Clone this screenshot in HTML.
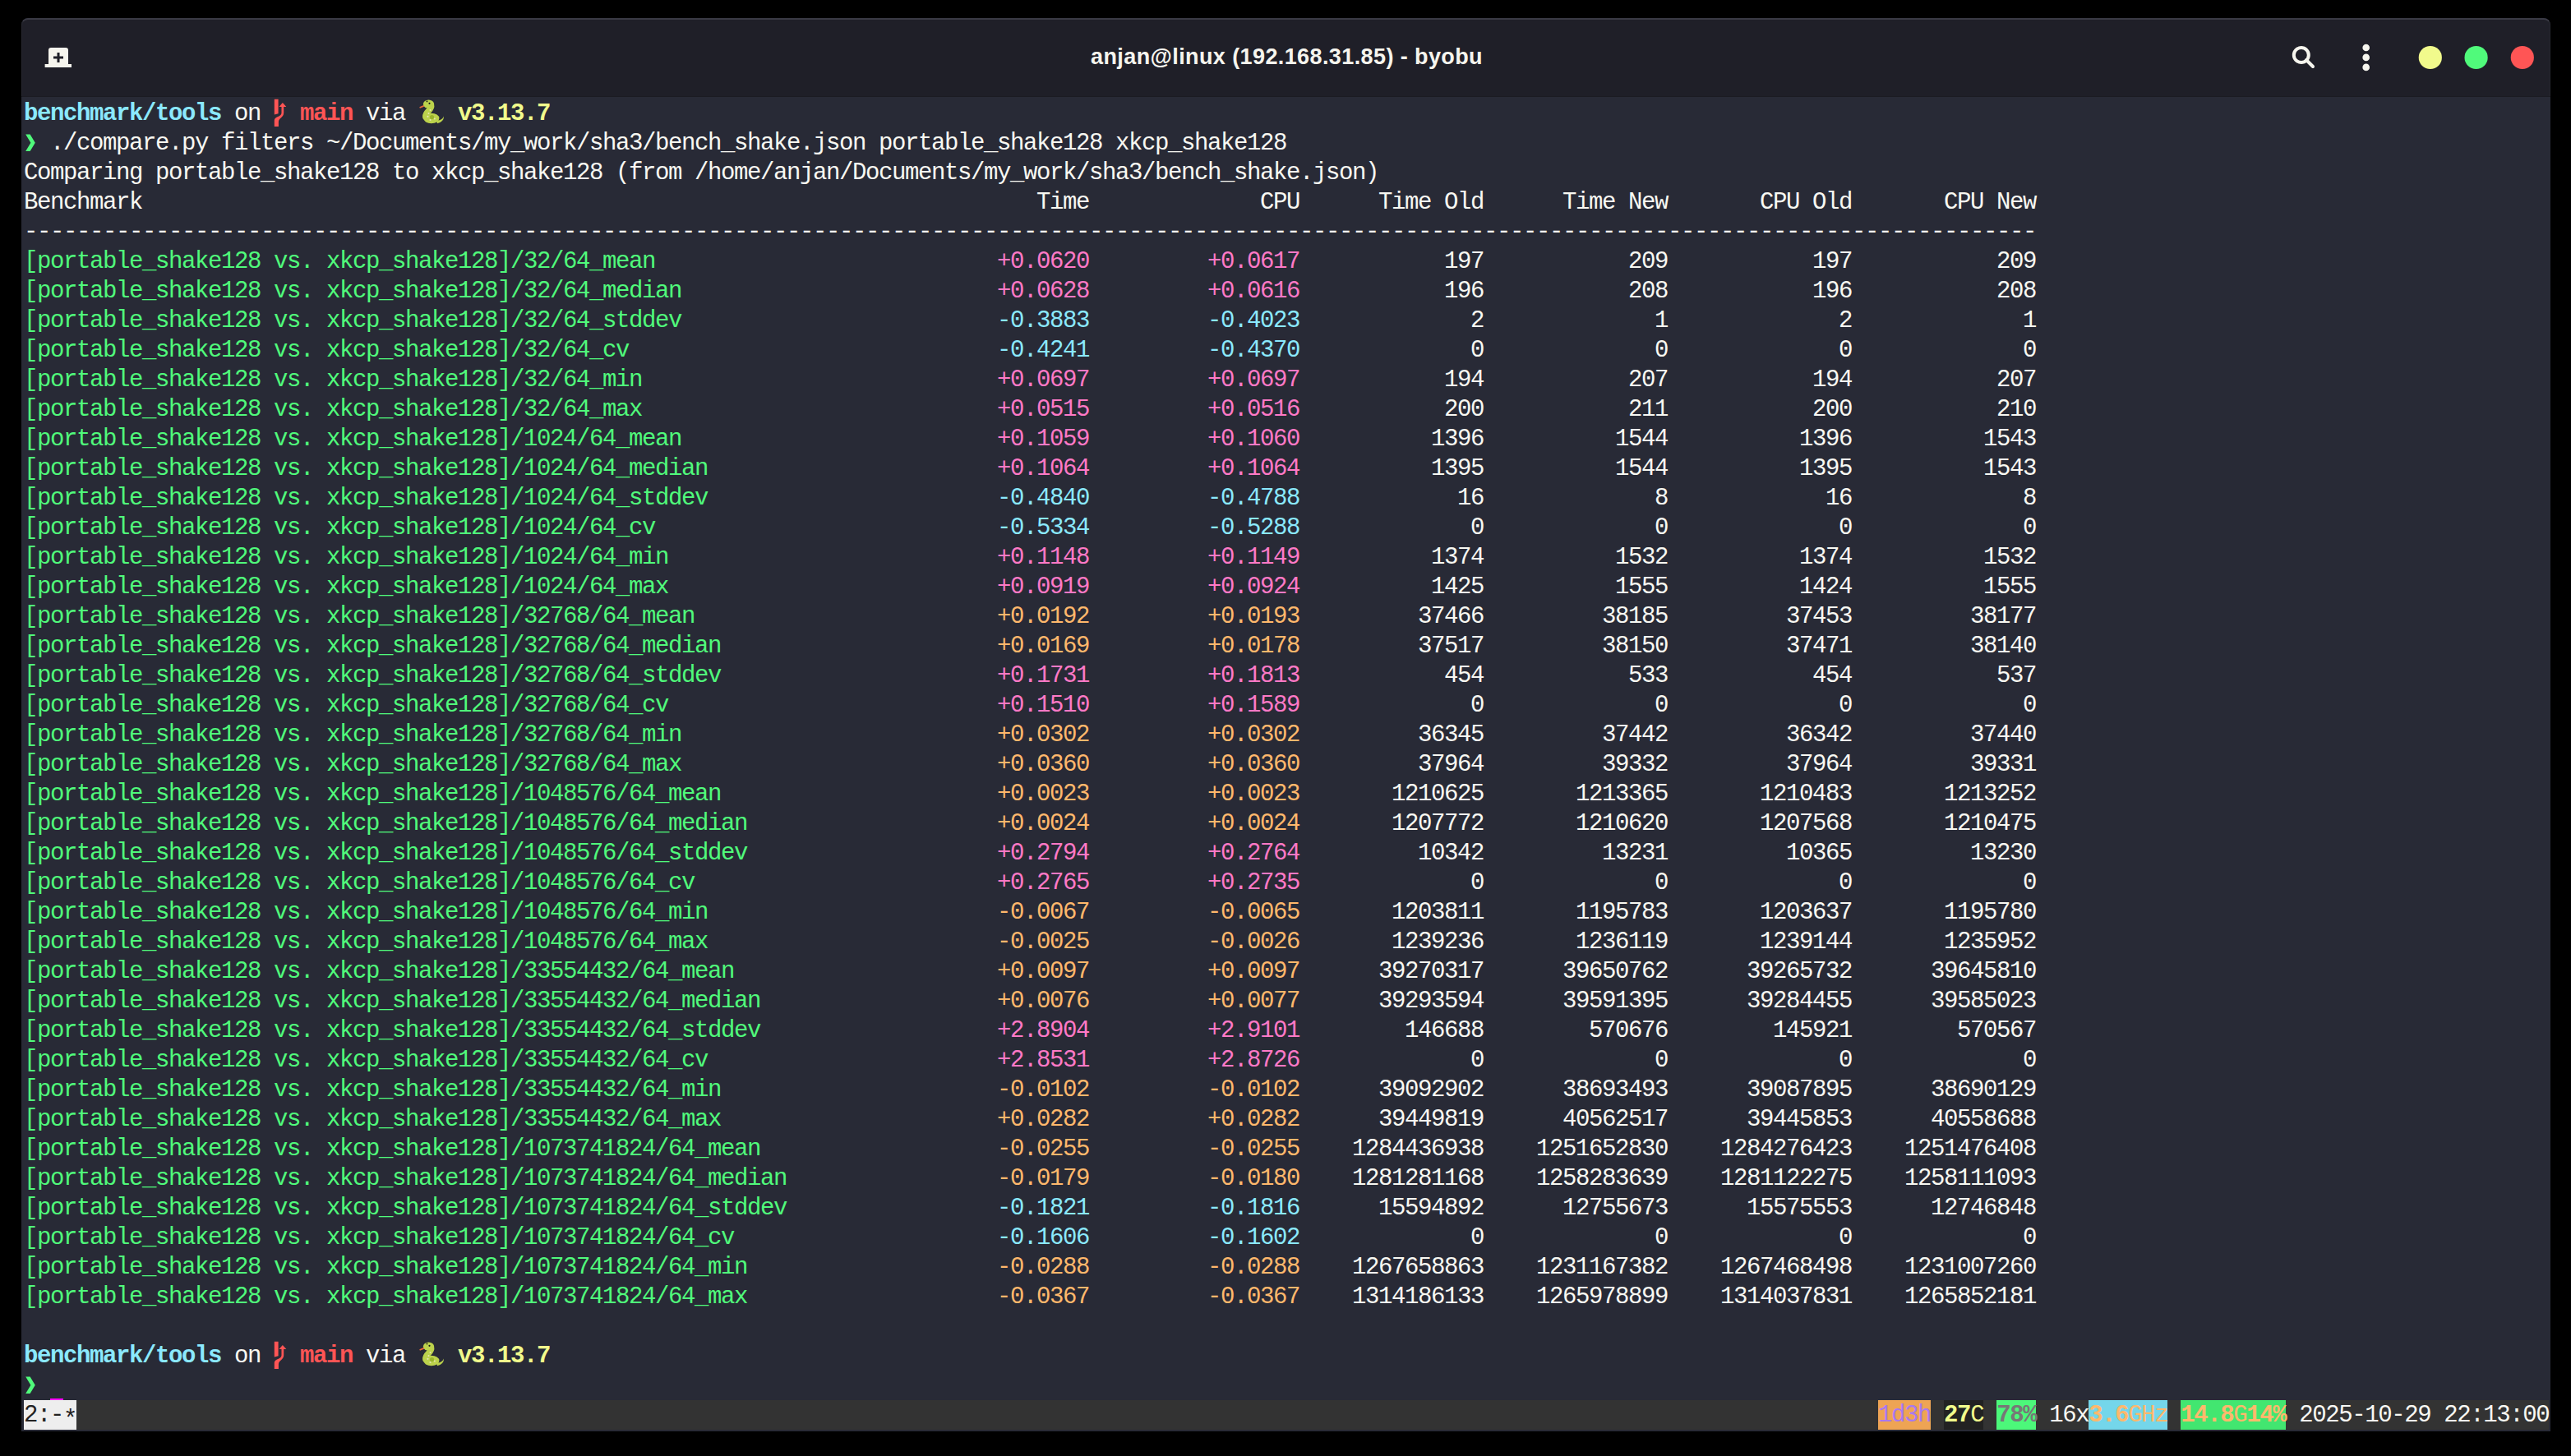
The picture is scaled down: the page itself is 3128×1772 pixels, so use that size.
<!DOCTYPE html>
<html><head><meta charset="utf-8"><style>
html,body{margin:0;padding:0;background:#000;width:3128px;height:1772px;overflow:hidden}
.win{position:absolute;left:26px;top:22px;width:3077px;height:1720px;border-radius:8px 8px 0 0;overflow:hidden;background:#282a36}
.tb{position:absolute;left:0;top:0;width:3077px;height:96px;background:#1f1f28;border-top:2px solid #3a3a44;border-left:1px solid #272830;border-right:1px solid #272830;box-sizing:border-box;border-radius:8px 8px 0 0}
.title{position:absolute;left:0;width:3077px;top:0;height:96px;line-height:96px;text-align:center;font-family:"Liberation Sans",sans-serif;font-weight:bold;font-size:27px;letter-spacing:0.4px;margin-top:-3px;color:#f6f5ee}
.term{position:absolute;left:0;top:96px;width:3077px;height:1624px;background:#282a36}
.r{position:absolute;left:3px;height:36px;line-height:36px;white-space:pre;font-family:"Liberation Mono",monospace;font-size:29px;letter-spacing:-1.4026px;color:#f8f8f2}
.sb{position:absolute;top:1586px;height:36px}
.git{display:inline-block;width:16px;height:36px;vertical-align:top;position:relative}
.snake{display:inline-block;width:32px;height:36px;vertical-align:top;position:relative}
</style></head><body>
<div class="win">
<div class="tb">
<div class="title">anjan@linux (192.168.31.85) - byobu</div>
</div>
<svg style="position:absolute;left:-26px;top:-22px;z-index:5" width="3128" height="1772" viewBox="0 0 3128 1772">
<defs>
<g id="git">
<path d="M333.8 120.8 H338.6 V138.2 L333.8 139.6 Z" fill="#ff5555"/>
<path d="M333.8 154 V146.5 C333.8 142 342.5 142 342.5 137.5 V129.5 H345.2 V137.5 C345.2 143 338.9 143.5 338.9 148.5 V154 Z" fill="#ff5555"/>
<path d="M343.9 125 L348.3 130 H339.5 Z" fill="#ff5555"/>
</g>
<g id="snake">
<path d="M510.6 131 L516.8 128.3" stroke="#e8683a" stroke-width="1.8"/>
<ellipse cx="521.5" cy="126.6" rx="6.6" ry="5.2" fill="#bcd24c"/>
<path d="M524.5 128 C526 134 517.5 135.5 517.8 142" fill="none" stroke="#bcd24c" stroke-width="7.5" stroke-linecap="round"/>
<ellipse cx="524.8" cy="144" rx="9.6" ry="6.2" fill="#bcd24c"/>
<path d="M531 146.5 Q537.5 147 540 141.6 Q540 148.5 532 150.2 Z" fill="#bcd24c"/>
<circle cx="525.5" cy="142.6" r="2.6" fill="#9ab42c"/>
<circle cx="519.5" cy="123.4" r="0.9" fill="#1b1b1b"/>
<circle cx="522.5" cy="125.8" r="1.1" fill="#1b1b1b"/>
<circle cx="523.5" cy="134" r="1" fill="#e6e4b4"/>
<circle cx="521.5" cy="138" r="1" fill="#e6e4b4"/>
<circle cx="520.5" cy="141.8" r="1.1" fill="#e6e4b4"/>
<circle cx="523.5" cy="146" r="1.1" fill="#e6e4b4"/>
<circle cx="528.8" cy="144.5" r="1" fill="#e6e4b4"/>
</g>
</defs>
<path id="chev" d="M31.2 1675.5 H36.6 L42.8 1685.7 L36.6 1696 H31.2 L37.4 1685.7 Z" fill="#50fa7b"/>
<use href="#chev" transform="translate(0,-1512)"/>
<use href="#git"/><use href="#git" transform="translate(0,1512)"/>
<use href="#snake"/><use href="#snake" transform="translate(0,1512)"/>
<path d="M59 61 Q59 58 62 58 H80 Q83 58 83 61 V78 H87 V82 H54.6 V78 H59 Z" fill="#f6f5ee"/>
<path d="M65 70 H77 M71 64 V76" stroke="#1f1f28" stroke-width="3"/>
<circle cx="2799.8" cy="67" r="9" fill="none" stroke="#f6f5ee" stroke-width="4"/>
<line x1="2806" y1="73" x2="2814" y2="81" stroke="#f6f5ee" stroke-width="4" stroke-linecap="round"/>
<circle cx="2878.7" cy="58" r="4.3" fill="#f6f5ee"/>
<circle cx="2878.7" cy="69.9" r="4.3" fill="#f6f5ee"/>
<circle cx="2878.7" cy="81.9" r="4.3" fill="#f6f5ee"/>
<circle cx="2956.8" cy="70" r="14.1" fill="#f1fa8c"/>
<circle cx="3012.6" cy="70" r="14.1" fill="#50fa7b"/>
<circle cx="3068.8" cy="70" r="14.1" fill="#ff5555"/>
</svg>
<div class="term">
<div style="position:absolute;left:0;top:-1px;width:3077px;height:1px;background:#1b1b22"></div>
<div class="r" style="top:3px"><span style="color:#8be9fd;font-weight:bold">benchmark/tools</span> on <span class="git"></span> <span style="color:#ff5555;font-weight:bold">main</span> via <span class="snake"></span> <span style="color:#f1fa8c;font-weight:bold">v3.13.7</span></div><div class="r" style="top:39px">  ./compare.py filters ~/Documents/my_work/sha3/bench_shake.json portable_shake128 xkcp_shake128</div><div class="r" style="top:75px">Comparing portable_shake128 to xkcp_shake128 (from /home/anjan/Documents/my_work/sha3/bench_shake.json)</div><div class="r" style="top:111px">Benchmark                                                                    Time             CPU      Time Old      Time New       CPU Old       CPU New</div><div class="r" style="top:147px">---------------------------------------------------------------------------------------------------------------------------------------------------------</div><div class="r" style="top:183px"><span style="color:#50fa7b">[portable_shake128 vs. xkcp_shake128]/32/64_mean                 </span><span style="color:#ff79c6">         +0.0620</span><span style="color:#ff79c6">         +0.0617</span>           197           209           197           209</div><div class="r" style="top:219px"><span style="color:#50fa7b">[portable_shake128 vs. xkcp_shake128]/32/64_median               </span><span style="color:#ff79c6">         +0.0628</span><span style="color:#ff79c6">         +0.0616</span>           196           208           196           208</div><div class="r" style="top:255px"><span style="color:#50fa7b">[portable_shake128 vs. xkcp_shake128]/32/64_stddev               </span><span style="color:#8be9fd">         -0.3883</span><span style="color:#8be9fd">         -0.4023</span>             2             1             2             1</div><div class="r" style="top:291px"><span style="color:#50fa7b">[portable_shake128 vs. xkcp_shake128]/32/64_cv                   </span><span style="color:#8be9fd">         -0.4241</span><span style="color:#8be9fd">         -0.4370</span>             0             0             0             0</div><div class="r" style="top:327px"><span style="color:#50fa7b">[portable_shake128 vs. xkcp_shake128]/32/64_min                  </span><span style="color:#ff79c6">         +0.0697</span><span style="color:#ff79c6">         +0.0697</span>           194           207           194           207</div><div class="r" style="top:363px"><span style="color:#50fa7b">[portable_shake128 vs. xkcp_shake128]/32/64_max                  </span><span style="color:#ff79c6">         +0.0515</span><span style="color:#ff79c6">         +0.0516</span>           200           211           200           210</div><div class="r" style="top:399px"><span style="color:#50fa7b">[portable_shake128 vs. xkcp_shake128]/1024/64_mean               </span><span style="color:#ff79c6">         +0.1059</span><span style="color:#ff79c6">         +0.1060</span>          1396          1544          1396          1543</div><div class="r" style="top:435px"><span style="color:#50fa7b">[portable_shake128 vs. xkcp_shake128]/1024/64_median             </span><span style="color:#ff79c6">         +0.1064</span><span style="color:#ff79c6">         +0.1064</span>          1395          1544          1395          1543</div><div class="r" style="top:471px"><span style="color:#50fa7b">[portable_shake128 vs. xkcp_shake128]/1024/64_stddev             </span><span style="color:#8be9fd">         -0.4840</span><span style="color:#8be9fd">         -0.4788</span>            16             8            16             8</div><div class="r" style="top:507px"><span style="color:#50fa7b">[portable_shake128 vs. xkcp_shake128]/1024/64_cv                 </span><span style="color:#8be9fd">         -0.5334</span><span style="color:#8be9fd">         -0.5288</span>             0             0             0             0</div><div class="r" style="top:543px"><span style="color:#50fa7b">[portable_shake128 vs. xkcp_shake128]/1024/64_min                </span><span style="color:#ff79c6">         +0.1148</span><span style="color:#ff79c6">         +0.1149</span>          1374          1532          1374          1532</div><div class="r" style="top:579px"><span style="color:#50fa7b">[portable_shake128 vs. xkcp_shake128]/1024/64_max                </span><span style="color:#ff79c6">         +0.0919</span><span style="color:#ff79c6">         +0.0924</span>          1425          1555          1424          1555</div><div class="r" style="top:615px"><span style="color:#50fa7b">[portable_shake128 vs. xkcp_shake128]/32768/64_mean              </span><span style="color:#ffb86c">         +0.0192</span><span style="color:#ffb86c">         +0.0193</span>         37466         38185         37453         38177</div><div class="r" style="top:651px"><span style="color:#50fa7b">[portable_shake128 vs. xkcp_shake128]/32768/64_median            </span><span style="color:#ffb86c">         +0.0169</span><span style="color:#ffb86c">         +0.0178</span>         37517         38150         37471         38140</div><div class="r" style="top:687px"><span style="color:#50fa7b">[portable_shake128 vs. xkcp_shake128]/32768/64_stddev            </span><span style="color:#ff79c6">         +0.1731</span><span style="color:#ff79c6">         +0.1813</span>           454           533           454           537</div><div class="r" style="top:723px"><span style="color:#50fa7b">[portable_shake128 vs. xkcp_shake128]/32768/64_cv                </span><span style="color:#ff79c6">         +0.1510</span><span style="color:#ff79c6">         +0.1589</span>             0             0             0             0</div><div class="r" style="top:759px"><span style="color:#50fa7b">[portable_shake128 vs. xkcp_shake128]/32768/64_min               </span><span style="color:#ffb86c">         +0.0302</span><span style="color:#ffb86c">         +0.0302</span>         36345         37442         36342         37440</div><div class="r" style="top:795px"><span style="color:#50fa7b">[portable_shake128 vs. xkcp_shake128]/32768/64_max               </span><span style="color:#ffb86c">         +0.0360</span><span style="color:#ffb86c">         +0.0360</span>         37964         39332         37964         39331</div><div class="r" style="top:831px"><span style="color:#50fa7b">[portable_shake128 vs. xkcp_shake128]/1048576/64_mean            </span><span style="color:#ffb86c">         +0.0023</span><span style="color:#ffb86c">         +0.0023</span>       1210625       1213365       1210483       1213252</div><div class="r" style="top:867px"><span style="color:#50fa7b">[portable_shake128 vs. xkcp_shake128]/1048576/64_median          </span><span style="color:#ffb86c">         +0.0024</span><span style="color:#ffb86c">         +0.0024</span>       1207772       1210620       1207568       1210475</div><div class="r" style="top:903px"><span style="color:#50fa7b">[portable_shake128 vs. xkcp_shake128]/1048576/64_stddev          </span><span style="color:#ff79c6">         +0.2794</span><span style="color:#ff79c6">         +0.2764</span>         10342         13231         10365         13230</div><div class="r" style="top:939px"><span style="color:#50fa7b">[portable_shake128 vs. xkcp_shake128]/1048576/64_cv              </span><span style="color:#ff79c6">         +0.2765</span><span style="color:#ff79c6">         +0.2735</span>             0             0             0             0</div><div class="r" style="top:975px"><span style="color:#50fa7b">[portable_shake128 vs. xkcp_shake128]/1048576/64_min             </span><span style="color:#ffb86c">         -0.0067</span><span style="color:#ffb86c">         -0.0065</span>       1203811       1195783       1203637       1195780</div><div class="r" style="top:1011px"><span style="color:#50fa7b">[portable_shake128 vs. xkcp_shake128]/1048576/64_max             </span><span style="color:#ffb86c">         -0.0025</span><span style="color:#ffb86c">         -0.0026</span>       1239236       1236119       1239144       1235952</div><div class="r" style="top:1047px"><span style="color:#50fa7b">[portable_shake128 vs. xkcp_shake128]/33554432/64_mean           </span><span style="color:#ffb86c">         +0.0097</span><span style="color:#ffb86c">         +0.0097</span>      39270317      39650762      39265732      39645810</div><div class="r" style="top:1083px"><span style="color:#50fa7b">[portable_shake128 vs. xkcp_shake128]/33554432/64_median         </span><span style="color:#ffb86c">         +0.0076</span><span style="color:#ffb86c">         +0.0077</span>      39293594      39591395      39284455      39585023</div><div class="r" style="top:1119px"><span style="color:#50fa7b">[portable_shake128 vs. xkcp_shake128]/33554432/64_stddev         </span><span style="color:#ff79c6">         +2.8904</span><span style="color:#ff79c6">         +2.9101</span>        146688        570676        145921        570567</div><div class="r" style="top:1155px"><span style="color:#50fa7b">[portable_shake128 vs. xkcp_shake128]/33554432/64_cv             </span><span style="color:#ff79c6">         +2.8531</span><span style="color:#ff79c6">         +2.8726</span>             0             0             0             0</div><div class="r" style="top:1191px"><span style="color:#50fa7b">[portable_shake128 vs. xkcp_shake128]/33554432/64_min            </span><span style="color:#ffb86c">         -0.0102</span><span style="color:#ffb86c">         -0.0102</span>      39092902      38693493      39087895      38690129</div><div class="r" style="top:1227px"><span style="color:#50fa7b">[portable_shake128 vs. xkcp_shake128]/33554432/64_max            </span><span style="color:#ffb86c">         +0.0282</span><span style="color:#ffb86c">         +0.0282</span>      39449819      40562517      39445853      40558688</div><div class="r" style="top:1263px"><span style="color:#50fa7b">[portable_shake128 vs. xkcp_shake128]/1073741824/64_mean         </span><span style="color:#ffb86c">         -0.0255</span><span style="color:#ffb86c">         -0.0255</span>    1284436938    1251652830    1284276423    1251476408</div><div class="r" style="top:1299px"><span style="color:#50fa7b">[portable_shake128 vs. xkcp_shake128]/1073741824/64_median       </span><span style="color:#ffb86c">         -0.0179</span><span style="color:#ffb86c">         -0.0180</span>    1281281168    1258283639    1281122275    1258111093</div><div class="r" style="top:1335px"><span style="color:#50fa7b">[portable_shake128 vs. xkcp_shake128]/1073741824/64_stddev       </span><span style="color:#8be9fd">         -0.1821</span><span style="color:#8be9fd">         -0.1816</span>      15594892      12755673      15575553      12746848</div><div class="r" style="top:1371px"><span style="color:#50fa7b">[portable_shake128 vs. xkcp_shake128]/1073741824/64_cv           </span><span style="color:#8be9fd">         -0.1606</span><span style="color:#8be9fd">         -0.1602</span>             0             0             0             0</div><div class="r" style="top:1407px"><span style="color:#50fa7b">[portable_shake128 vs. xkcp_shake128]/1073741824/64_min          </span><span style="color:#ffb86c">         -0.0288</span><span style="color:#ffb86c">         -0.0288</span>    1267658863    1231167382    1267468498    1231007260</div><div class="r" style="top:1443px"><span style="color:#50fa7b">[portable_shake128 vs. xkcp_shake128]/1073741824/64_max          </span><span style="color:#ffb86c">         -0.0367</span><span style="color:#ffb86c">         -0.0367</span>    1314186133    1265978899    1314037831    1265852181</div><div class="r" style="top:1479px"></div><div class="r" style="top:1515px"><span style="color:#8be9fd;font-weight:bold">benchmark/tools</span> on <span class="git"></span> <span style="color:#ff5555;font-weight:bold">main</span> via <span class="snake"></span> <span style="color:#f1fa8c;font-weight:bold">v3.13.7</span></div><div class="r" style="top:1551px"></div>
<div class="sb" style="left:3px;width:3072px;background:#333333"></div><div class="sb" style="left:3px;width:64px;background:#eeeeee"></div><div class="sb" style="left:2259px;width:64px;background:#eea454"></div><div class="sb" style="left:2339px;width:48px;background:#222222"></div><div class="sb" style="left:2403px;width:48px;background:#4cf87a"></div><div class="sb" style="left:2515px;width:96px;background:#74d6ea"></div><div class="sb" style="left:2627px;width:128px;background:#42e670"></div>
<div class="r" style="top:1587px"><span style="color:#222222">2:-</span><span style="color:#222222;position:relative;top:6px">*</span>                                                                                                                                         <span style="color:#a878f2">1d3h</span> <span style="color:#f1fa8c;font-weight:bold">27</span><span style="color:#f1fa8c">C</span> <span style="color:#777777;font-weight:bold">78%</span> <span style="color:#f8f8f2">16x</span><span style="color:#ffb86c;font-weight:bold">3.6</span><span style="color:#ffb86c">GHz</span> <span style="color:#ffb86c;font-weight:bold">14.8</span><span style="color:#ffb86c">G</span><span style="color:#ffb86c;font-weight:bold">14%</span> <span style="color:#f8f8f2">2025-10-29 22:13:00</span></div>
<div style="position:absolute;left:35px;top:1584px;width:16px;height:2px;background:#ff00ff"></div>
</div>
</div>
</body></html>
